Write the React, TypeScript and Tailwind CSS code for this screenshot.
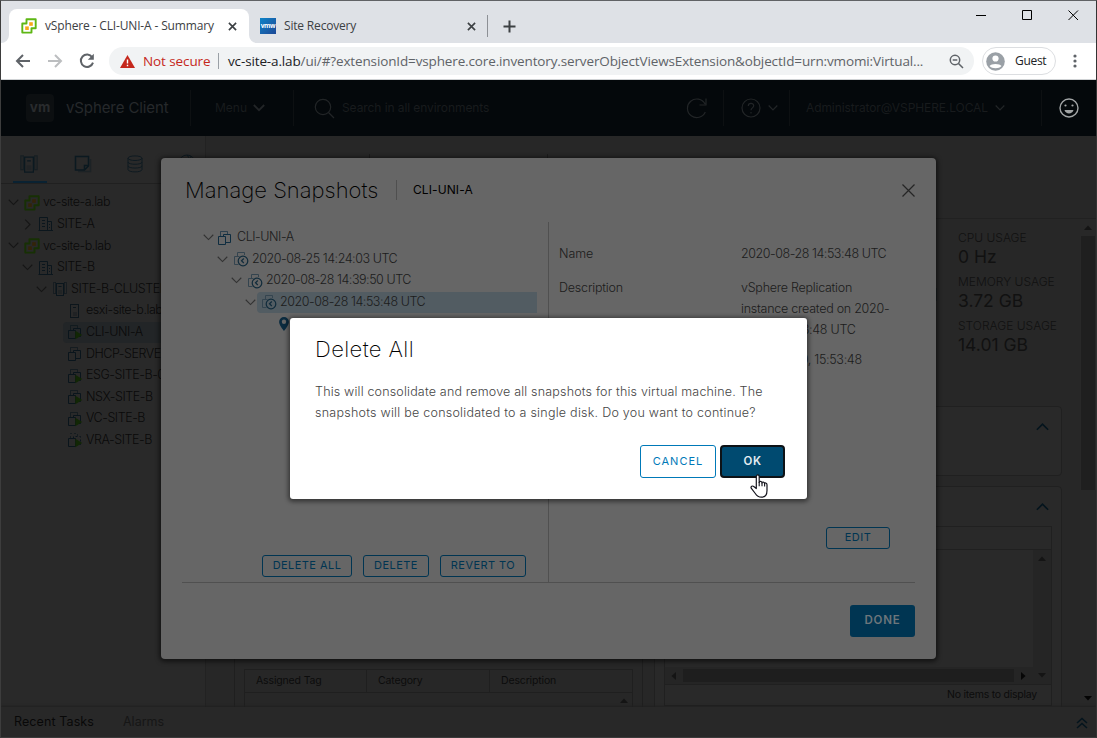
import type { ReactNode } from "react";

function Chevron({ dir = "down", size = 10, color = "#161616", w = 1.2 }: { dir?: "down" | "right" | "up"; size?: number; color?: string; w?: number }) {
  const d = dir === "down" ? "M0.8 3 L6 8.2 L11.2 3" : dir === "up" ? "M0.8 9 L6 3.8 L11.2 9" : "M3.5 0.8 L8.7 6 L3.5 11.2";
  return (
    <svg width={size} height={size} viewBox="0 0 12 12" fill="none" stroke={color} strokeWidth={w} className="shrink-0">
      <path d={d} />
    </svg>
  );
}

function VSphereIcon({ green, orange, size = 16 }: { green: string; orange: string; size?: number }) {
  return (
    <svg width={size} height={size} viewBox="0 0 16 16" fill="none" className="shrink-0">
      <path d="M5.5 5.5 V1.2 H14.7 V10.2 H10.5 V14.6 H1.3 V5.5 Z" stroke={green} strokeWidth="1.9" strokeLinejoin="round" />
      <rect x="8.2" y="4.2" width="3.6" height="3.6" fill={orange} />
      <rect x="4.2" y="8.4" width="3.6" height="3.6" fill={orange} />
    </svg>
  );
}

function SiteIcon() {
  return (
    <svg width="16" height="16" viewBox="0 0 16 16" fill="none" stroke="#0b161d" className="shrink-0">
      <path d="M1.5 14.5V1.5H9.5V14.5M9.5 5.5H13.5V14.5M0.5 14.5H15M4 4.5H7M4 7.5H7M4 10.5H7M11 8.5H12M11 11.5H12" />
    </svg>
  );
}

function ClusterIcon({ size = 16, color = "#0b161d" }: { size?: number; color?: string }) {
  return (
    <svg width={size} height={size} viewBox="0 0 16 16" fill="none" stroke={color} className="shrink-0">
      <path d="M4 1.5H1.5V12.5H4M12 1.5H14.5V12.5H12M3.5 1.5V12.5M12.5 1.5V12.5" opacity=".6" />
      <rect x="4.5" y="2.5" width="7" height="12" />
      <path d="M6.5 5.5H9.5" />
      <rect x="6" y="9" width="4" height="4" fill={color} opacity=".25" stroke="none" />
    </svg>
  );
}

function HostIcon() {
  return (
    <svg width="16" height="16" viewBox="0 0 16 16" fill="none" stroke="#0c151b" className="shrink-0">
      <rect x="3.5" y="1.5" width="8" height="13" />
      <path d="M6 4.5H9" />
      <rect x="6" y="9" width="4" height="4" fill="#0c151b" opacity=".3" stroke="none" />
    </svg>
  );
}

function VmIcon({ color = "#0a151c", running = false, dots = false }: { color?: string; running?: boolean; dots?: boolean }) {
  return (
    <svg width="16" height="16" viewBox="0 0 16 16" fill="none" stroke={color} className="shrink-0">
      <path d="M3.5 6V1.5H10.5V5" opacity=".65" strokeDasharray={dots ? "2 2" : undefined} />
      <path d="M6.5 6.5V4.5H13.5V12.5H8.5" strokeDasharray={dots ? "2 2" : undefined} />
      <path d="M1.5 6.5H8.5V14.5H1.5Z" />
      {running && <path d="M8.3 6.8 L15.2 11 L8.3 15.2 Z" fill="#122705" stroke="none" />}
    </svg>
  );
}

function SnapshotIcon() {
  return (
    <svg width="16" height="16" viewBox="0 0 16 16" fill="none" className="shrink-0">
      <path d="M4.5 5V1.5H11.5V4M5.5 13.5H1.5V5.5H6.5" stroke="#34444f" />
      <circle cx="10" cy="10" r="4.8" stroke="#102b3b" strokeWidth="1.2" />
      <path d="M10.8 7.5 L8.5 9.8 L10.8 12" stroke="#102b3b" strokeWidth="1.2" />
    </svg>
  );
}

const green = "#173004";
const orange = "#332408";

type Row = { pad: string; chev: "down" | "right" | null; icon: ReactNode; label: string; active?: boolean };

const inventory: Row[] = [
  { pad: "pl-[5px]", chev: "down", icon: <VSphereIcon green={green} orange={orange} />, label: "vc-site-a.lab" },
  { pad: "pl-[19px]", chev: "right", icon: <SiteIcon />, label: "SITE-A" },
  { pad: "pl-[5px]", chev: "down", icon: <VSphereIcon green={green} orange={orange} />, label: "vc-site-b.lab" },
  { pad: "pl-[19px]", chev: "down", icon: <SiteIcon />, label: "SITE-B" },
  { pad: "pl-[33px]", chev: "down", icon: <ClusterIcon />, label: "SITE-B-CLUSTER" },
  { pad: "pl-[48px]", chev: null, icon: <HostIcon />, label: "esxi-site-b.lab" },
  { pad: "pl-[48px]", chev: null, icon: <VmIcon running />, label: "CLI-UNI-A", active: true },
  { pad: "pl-[48px]", chev: null, icon: <VmIcon />, label: "DHCP-SERVER" },
  { pad: "pl-[48px]", chev: null, icon: <VmIcon running />, label: "ESG-SITE-B-01" },
  { pad: "pl-[48px]", chev: null, icon: <VmIcon running />, label: "NSX-SITE-B" },
  { pad: "pl-[48px]", chev: null, icon: <VmIcon running />, label: "VC-SITE-B" },
  { pad: "pl-[48px]", chev: null, icon: <VmIcon running dots />, label: "VRA-SITE-B" },
];

function TitleBar() {
  return (
    <div className="flex h-[42px] shrink-0 items-end bg-[#dee1e6] font-['Open_Sans','Noto_Sans',sans-serif] text-[12px] text-[#3c4043]">
      <svg width="8" height="8" viewBox="0 0 8 8" className="shrink-0"><path d="M8 0V8H0A8 8 0 0 0 8 0Z" fill="#fff" /></svg>
      <div className="flex h-[34px] w-[240px] shrink-0 items-center rounded-t-lg bg-white pl-[12px]">
        <VSphereIcon green="#5eb715" orange="#f7a81b" />
        <span className="ml-2 w-[180px] whitespace-nowrap tracking-[-0.15px]">vSphere - CLI-UNI-A - Summary</span>
        <svg width="9" height="9" viewBox="0 0 10 10" stroke="#3c4043" strokeWidth="1.8" className="ml-[3px]"><path d="M1 1L9 9M9 1L1 9" /></svg>
      </div>
      <svg width="8" height="8" viewBox="0 0 8 8" className="shrink-0"><path d="M0 0V8H8A8 8 0 0 1 0 0Z" fill="#fff" /></svg>
      <div className="flex h-[34px] w-[231px] items-center border-r border-[#8d9095] [border-image:linear-gradient(transparent_7px,#8d9095_7px,#8d9095_27px,transparent_27px)_1] pl-[3px]">
        <div className="flex h-4 w-4 items-center justify-center bg-linear-to-br from-[#0b84c8] to-[#1b4896] text-[6.5px] font-bold tracking-[-0.4px] text-white">vmw</div>
        <span className="ml-2 w-[181px] whitespace-nowrap tracking-[-0.18px]">Site Recovery</span>
        <svg width="9" height="9" viewBox="0 0 10 10" stroke="#3c4043" strokeWidth="1.8" className="ml-[2px]"><path d="M1 1L9 9M9 1L1 9" /></svg>
      </div>
      <div className="flex h-[34px] items-center pl-[15px]">
        <svg width="13" height="13" viewBox="0 0 13 13" stroke="#3c4043" strokeWidth="2"><path d="M6.5 0.5V12.5M0.5 6.5H12.5" /></svg>
      </div>
      <div className="ml-auto flex h-[42px] items-start gap-[35px] pt-[9px] pr-[17px]">
        <svg width="11" height="11" viewBox="0 0 11 11" stroke="#000" fill="none"><path d="M0 5.5H10" /></svg>
        <svg width="11" height="11" viewBox="0 0 11 11" stroke="#000" fill="none"><path d="M0.5 0.5H9.5V9.5H0.5Z" /></svg>
        <svg width="11" height="11" viewBox="0 0 11 11" stroke="#000" fill="none"><path d="M0.5 0.5L10 10M10 0.5L0.5 10" /></svg>
      </div>
    </div>
  );
}

function Toolbar() {
  return (
    <div className="flex h-[37px] shrink-0 items-center border-b border-[#cfd2d4] bg-white pl-[14px] font-['Open_Sans','Noto_Sans',sans-serif] text-[14px]">
      <svg width="16" height="14" viewBox="0 0 16 14" fill="none" stroke="#5f6368" strokeWidth="2"><path d="M15 7H2M8 1L2 7L8 13" /></svg>
      <svg width="16" height="14" viewBox="0 0 16 14" fill="none" stroke="#bcbec0" strokeWidth="2" className="ml-[16px]"><path d="M1 7H14M8 1L14 7L8 13" /></svg>
      <svg width="16" height="16" viewBox="0 0 16 16" fill="none" stroke="#5f6368" strokeWidth="2" className="ml-[16px]"><path d="M13.2 4.2A6.2 6.2 0 1 0 14 9.6" /><path d="M14.8 0.8V6.8H8.8Z" fill="#5f6368" stroke="none" /></svg>
      <div className="ml-[14px] flex h-7 w-[865px] shrink-0 items-center rounded-full bg-[#f1f3f4] pl-[11px]">
        <svg width="15" height="13" viewBox="0 0 15 13"><path d="M7.5 0L15 13H0Z" fill="#c5281c" /><path d="M7.5 4.5V8.5M7.5 9.7V11.2" stroke="#fff" strokeWidth="1.4" /></svg>
        <span className="ml-[8px] w-[67px] whitespace-nowrap text-[13.5px] tracking-[-0.1px] text-[#c5281c]">Not secure</span>
        <span className="ml-[8px] h-4 w-px bg-[#9aa0a6]" />
        <span className="ml-[9px] w-[700px] whitespace-nowrap text-[13.5px] tracking-[-0.135px] text-[#5f6368]"><span className="text-[#202124]">vc-site-a.lab</span>/ui/#?extensionId=vsphere.core.inventory.serverObjectViewsExtension&amp;objectId=urn:vmomi:Virtual...</span>
        <svg width="15" height="15" viewBox="0 0 15 15" fill="none" stroke="#5f6368" strokeWidth="1.5" className="mr-[10px] ml-auto"><circle cx="6" cy="6" r="4.7" /><path d="M3.7 6H8.3M9.5 9.5L14 14" /></svg>
      </div>
      <div className="ml-[8px] flex h-7 w-[74px] shrink-0 items-center rounded-full border border-[#dcdee1] pl-[3px]">
        <svg width="19" height="19" viewBox="0 0 19 19"><circle cx="9.5" cy="9.5" r="9.3" fill="#9aa0a6" /><circle cx="9.5" cy="6.5" r="3.1" fill="#fff" /><path d="M3.5 14C5 11.3 14 11.3 15.5 14C13 17 6 17 3.5 14Z" fill="#fff" /></svg>
        <span className="ml-[10px] text-[12px] tracking-[-0.3px] text-[#202124]">Guest</span>
      </div>
      <svg width="4" height="14" viewBox="0 0 4 14" fill="#5f6368" className="ml-[17px]"><circle cx="2" cy="2" r="1.6" /><circle cx="2" cy="7" r="1.6" /><circle cx="2" cy="12" r="1.6" /></svg>
    </div>
  );
}

function AppHeader() {
  return (
    <div className="flex h-14 shrink-0 items-center bg-[#04080b] text-[13px] text-[#181b1d]">
      <div className="flex h-9 w-[190px] items-center border-r border-[#0d1012] pl-[25px]">
        <div className="flex h-7 w-7 items-center justify-center rounded-sm bg-[#0c0f11] pb-[2px] text-[13.5px] font-bold text-[#292b2d]">vm</div>
        <span className="ml-3 text-[15px] font-normal tracking-[-0.1px] whitespace-nowrap text-[#26292b]">vSphere Client</span>
      </div>
      <div className="flex h-9 w-[103px] items-center border-r border-[#0d1012] pl-[24px]">
        <span className="mr-[7px] w-[31px] text-[12px]">Menu</span><Chevron size={12} color="#222527" w={1.8} />
      </div>
      <div className="flex h-9 w-[430px] items-center border-r border-[#0d1012] pl-[20px]">
        <svg width="21" height="21" viewBox="0 0 21 21" fill="none" stroke="#222527" strokeWidth="1.2"><circle cx="9" cy="9" r="7.7" /><path d="M14.5 14.5L20 20" /></svg>
        <span className="ml-[7px] text-[12px] font-normal tracking-[-0.08px]">Search in all environments</span>
        <svg width="21" height="21" viewBox="0 0 21 21" fill="none" stroke="#222527" strokeWidth="1.2" className="mr-[16px] ml-auto"><path d="M19 6A9.3 9.3 0 1 0 19.3 14M20 0.5V7H13.5" /></svg>
      </div>
      <div className="flex h-9 w-[66px] items-center border-r border-[#0d1012] pl-[17px]">
        <svg width="20" height="20" viewBox="0 0 20 20" fill="none" stroke="#222527" strokeWidth="1.2"><circle cx="10" cy="10" r="9" /><path d="M7.3 8C7.3 4.6 12.7 4.6 12.7 7.8C12.7 10 10 9.8 10 12.2M10 14V15.5" /></svg>
        <span className="ml-[7px] flex"><Chevron color="#222527" w={1.5} /></span>
      </div>
      <div className="flex h-9 w-[252px] items-center border-r border-[#0d1012] pl-[16px]">
        <span className="mr-[6px] w-[183px] text-[12px] font-normal tracking-[-0.1px] whitespace-nowrap">Administrator@VSPHERE.LOCAL</span><Chevron color="#222527" w={1.5} />
      </div>
      <svg width="20" height="20" viewBox="0 0 20 20" fill="none" stroke="#a2a5a6" strokeWidth="1.4" className="ml-[17px]"><circle cx="10" cy="10" r="9" /><circle cx="6.5" cy="7.5" r="1.1" fill="#a2a5a6" stroke="none" /><circle cx="13.5" cy="7.5" r="1.1" fill="#a2a5a6" stroke="none" /><path d="M5.5 12H14.5C13.6 16.5 6.4 16.5 5.5 12Z" fill="#a2a5a6" stroke="none" /></svg>
    </div>
  );
}

function Sidebar() {
  return (
    <div className="flex w-[205px] shrink-0 flex-col border-r border-[#222] bg-[#292929]">
      <div className="flex h-[48px] shrink-0 border-b border-[#202020] pl-[12px]">
        <div className="flex w-[34px] justify-center border-b-2 border-[#0a2232] pt-[18px] pr-[2px]"><ClusterIcon size={20} color="#0b1920" /></div>
        <svg width="18" height="18" viewBox="0 0 18 18" fill="none" stroke="#0b1920" strokeWidth="1.5" className="mt-[19px] ml-[27px]"><path d="M1.5 1.5H14.5V11L10.5 15H1.5ZM14.5 10.5H10.5V15" /><path d="M16.5 4V16.5H4" opacity=".4" /></svg>
        <svg width="18" height="18" viewBox="0 0 18 18" fill="none" stroke="#0e1a21" strokeWidth="1" className="mt-[19px] ml-[34px]"><ellipse cx="9" cy="3.2" rx="7" ry="2.3" /><path d="M2 3.2V14.5C2 17.7 16 17.7 16 14.5V3.2M2 7C2 10 16 10 16 7M2 10.8C2 13.8 16 13.8 16 10.8" /></svg>
        <svg width="18" height="18" viewBox="0 0 18 18" fill="none" stroke="#0e1a21" strokeWidth="1" className="mt-[18px] ml-[34px]"><circle cx="9" cy="9" r="8" /><path d="M2 5C8 8 13 6 13 2M9 1C14 7 13 13 9 17" /></svg>
      </div>
      <div className="flex flex-col overflow-hidden pt-[8px]">
        {inventory.map((r) => (
          <div key={r.label} className={`flex h-[21.6px] items-center text-[12.5px] font-light tracking-[-0.45px] text-[#0a0a0a] ${r.pad}`}>
            <span className="flex w-[14px] shrink-0 justify-center">{r.chev && <Chevron dir={r.chev} size={11} />}</span>
            <span className={`flex h-[21px] flex-1 items-center rounded-l-sm pl-1 ${r.active ? "bg-[#222527]" : ""}`}>
              {r.icon}
              <span className="ml-[3px] whitespace-nowrap">{r.label}</span>
            </span>
          </div>
        ))}
      </div>
    </div>
  );
}

function Usage({ label, value }: { label: string; value: string }) {
  return (
    <div className="h-[44px] whitespace-nowrap">
      <div className="text-[12px] leading-[18px] font-light">{label}</div>
      <div className="text-[17.5px] leading-[20px] font-normal">{value}</div>
    </div>
  );
}

function Triangle({ dir, color = "#141414" }: { dir: "up" | "down" | "left" | "right"; color?: string }) {
  const d = { up: "M0 6L4 1.5L8 6Z", down: "M0 2L4 6.5L8 2Z", left: "M6 0L1.5 4L6 8Z", right: "M2 0L6.5 4L2 8Z" }[dir];
  return <svg width="8" height="8" viewBox="0 0 8 8" fill={color} className="shrink-0"><path d={d} /></svg>;
}

function Content() {
  return (
    <div className="flex min-w-0 flex-1 flex-col bg-[#272727]">
      <div className="flex h-[83px] shrink-0 border-b border-[#212121] pt-[18px]">
        <span className="ml-[163px] h-5 w-px bg-[#1c1c1c]" />
        <span className="ml-[177px] h-5 w-px bg-[#1c1c1c]" />
      </div>
      <div className="flex min-h-0 flex-1">
        <div className="flex min-w-0 flex-1 flex-col overflow-hidden pl-[28px]">
          <div className="flex h-[187px] shrink-0 justify-end pt-[10px]">
            <span className="mt-[59px] mr-[21px] h-[13px] w-4 bg-[#1c2022]" />
            <div className="w-[104px] text-[#111]">
              <Usage label="CPU USAGE" value="0 Hz" />
              <Usage label="MEMORY USAGE" value="3.72 GB" />
              <Usage label="STORAGE USAGE" value="14.01 GB" />
            </div>
          </div>
          <div className="flex shrink-0">
            <div className="flex h-[310px] w-[409px] flex-col border border-[#1f1f1f] px-[9px] pt-[262px]">
              <div className="flex h-[24px] shrink-0 border border-[#1f1f1f] text-[10.5px] tracking-[-0.15px] text-[#0c0c0c]">
                <span className="w-[122px] border-r border-[#1f1f1f] pt-[3px] pl-[11px]">Assigned Tag</span>
                <span className="w-[123px] border-r border-[#1f1f1f] pt-[3px] pl-[11px]">Category</span>
                <span className="pt-[3px] pl-[11px]">Description</span>
              </div>
              <div className="flex flex-1 items-start justify-end border-x border-[#1f1f1f] pt-[4px] pr-[4px]"><Triangle dir="up" /></div>
            </div>
            <div className="ml-[11px] flex w-[408px] flex-col gap-[10px]">
              <div className="flex h-[70px] justify-end rounded-sm border border-[#202020] bg-[#292929] pt-[13px] pr-[12px]"><Chevron dir="up" size={13} color="#04141d" w={1.5} /></div>
              <div className="flex h-[230px] flex-col rounded-sm border border-[#202020] bg-[#292929] px-[9px]">
                <div className="flex h-[39px] shrink-0 justify-end pt-[13px] pr-[3px]"><Chevron dir="up" size={13} color="#04141d" w={1.5} /></div>
                <div className="flex h-[180px] flex-col border border-[#202020]">
                  <div className="h-[23px] shrink-0 border-b border-[#202020]" />
                  <div className="flex h-[135px] shrink-0 border-b border-[#202020]">
                    <div className="flex flex-1 flex-col justify-end">
                      <div className="flex h-[17px] items-center bg-[#252525] pl-[5px]"><Triangle dir="left" /><div className="mx-[5px] h-[13px] w-[331px] bg-[#1e1e1e]" /><Triangle dir="right" color="#060606" /></div>
                    </div>
                    <div className="flex w-[18px] flex-col items-center justify-between bg-[#252525] py-[5px]"><Triangle dir="up" /><Triangle dir="down" /></div>
                  </div>
                  <div className="pt-[2px] pr-[14px] text-right text-[10.5px] leading-[16px] tracking-[-0.24px] text-[#0c0c0c]">No items to display</div>
                </div>
              </div>
            </div>
          </div>
        </div>
        <div className="flex w-[34px] shrink-0 flex-col items-end">
          <div className="flex w-4 flex-1 flex-col items-center bg-[#282828] pt-[5px]">
            <Triangle dir="up" />
            <div className="mt-[4px] h-[254px] w-[14px] bg-[#1f1f1f]" />
            <div className="mt-auto mb-[5px]"><Triangle dir="down" color="#040404" /></div>
          </div>
        </div>
      </div>
    </div>
  );
}

function OutlineButton({ width, children }: { width: string; children: ReactNode }) {
  return <button className={`flex h-[22px] items-center justify-center rounded-[3px] border border-[#003552] pb-[2px] text-[11px] tracking-[0.45px] text-[#003552] ${width}`}>{children}</button>;
}

const snapshots = [
  { pad: "pl-[14px]", label: "2020-08-25 14:24:03 UTC", active: false },
  { pad: "pl-[28px]", label: "2020-08-28 14:39:50 UTC", active: false },
  { pad: "pl-[42px]", label: "2020-08-28 14:53:48 UTC", active: true },
];

function ManageSnapshots() {
  return (
    <div className="absolute top-[157px] left-[160px] flex h-[501px] w-[775px] flex-col rounded-sm bg-[#666] px-[21px] shadow-[0_1px_4px_2px_rgba(0,0,0,0.5)]">
      <div className="flex h-[64px] shrink-0 items-center pl-[3px] text-black">
        <h2 className="w-[211px] text-[22px] font-extralight tracking-[0px] whitespace-nowrap">Manage Snapshots</h2>
        <span className="h-5 w-px bg-[#4f4f4f]" />
        <span className="ml-[16px] text-[12px] font-normal tracking-[0.1px]">CLI-UNI-A</span>
        <svg width="13" height="13" viewBox="0 0 13 13" stroke="#252525" strokeWidth="1.2" className="ml-auto"><path d="M0.5 0.5L12.5 12.5M12.5 0.5L0.5 12.5" /></svg>
      </div>
      <div className="flex h-[361px] shrink-0 border-b border-[#505050] text-[12.5px] font-light text-[#1b1b1b]">
        <div className="flex w-[367px] shrink-0 flex-col border-r border-[#505050] pt-[5px] pl-[19px] tracking-[-0.45px]">
          <div className="flex h-[21.5px] items-center">
            <span className="flex w-[14px] justify-center"><Chevron size={11} color="#333" /></span>
            <span className="ml-[2px] flex"><VmIcon color="#0f2d40" /></span>
            <span className="ml-[4px]">CLI-UNI-A</span>
          </div>
          {snapshots.map((s) => (
            <div key={s.label} className={`flex h-[21.5px] items-center pr-[11px] ${s.pad}`}>
              <span className="flex w-[14px] shrink-0 justify-center"><Chevron size={11} color="#333" /></span>
              <span className={`flex h-[21px] flex-1 items-center rounded-l-sm pl-[4px] ${s.active ? "bg-[#525c62]" : ""}`}>
                <SnapshotIcon />
                <span className="ml-[3px] whitespace-nowrap">{s.label}</span>
              </span>
            </div>
          ))}
          <div className="flex h-[21.5px] items-center pl-[78px]">
            <svg width="10" height="14" viewBox="0 0 10 14"><path fillRule="evenodd" d="M5 0A4.9 4.9 0 0 1 9.9 4.9C9.9 8 5 14 5 14S0.1 8 0.1 4.9A4.9 4.9 0 0 1 5 0ZM5 2.6A2.2 2.2 0 1 0 5 7A2.2 2.2 0 0 0 5 2.6Z" fill="#0b2b3f" /></svg>
          </div>
          <div className="mt-auto mb-[5px] flex gap-[11px] pl-[61px] font-normal">
            <OutlineButton width="w-[90px]">DELETE ALL</OutlineButton>
            <OutlineButton width="w-[66px]">DELETE</OutlineButton>
            <OutlineButton width="w-[86px]">REVERT TO</OutlineButton>
          </div>
        </div>
        <div className="flex flex-1 flex-col pt-[21px] pl-[10px]">
          <div className="grid grid-cols-[182px_155px] gap-y-[13px] leading-[21px]">
            <span className="tracking-[-0.1px]">Name</span><span className="tracking-[-0.45px] whitespace-nowrap">2020-08-28 14:53:48 UTC</span>
            <span className="tracking-[-0.2px]">Description</span><span className="tracking-[-0.25px]">vSphere Replication<br />instance created on 2020-<br />08-28 14:53:48 UTC</span>
          </div>
          <div className="mt-[9px] grid grid-cols-[182px_155px] leading-[21px]">
            <span>Created</span><span className="tracking-[-0.3px] whitespace-nowrap">28/08/2020, 15:53:48</span>
          </div>
          <div className="mt-auto mb-[33px] flex justify-end pr-[25px] font-normal"><OutlineButton width="w-[64px]">EDIT</OutlineButton></div>
        </div>
      </div>
      <button className="mt-[22px] flex h-8 w-[65px] items-center justify-center self-end rounded-[3px] bg-[#003552] text-[11.5px] font-semibold tracking-[0.8px] text-[#6d767b]">DONE</button>
    </div>
  );
}

function DeleteAllDialog() {
  return (
    <div className="absolute top-[317px] left-[289px] flex h-[181px] w-[517px] flex-col rounded-[3px] bg-white px-[25px] shadow-[0_1px_4px_2px_rgba(0,0,0,0.45)]">
      <h3 className="mt-[16px] text-[22px] leading-[30px] font-extralight tracking-[0.4px] text-black">Delete All</h3>
      <p className="mt-[17px] text-[12.5px] leading-[21px] font-light tracking-[0.18px] whitespace-nowrap text-[#454545]">
        This will consolidate and remove all snapshots for this virtual machine. The<br />
        <span className="tracking-[0.25px]">snapshots will be consolidated to a single disk. Do you want to continue?</span>
      </p>
      <div className="mt-[22px] mr-[-3px] flex items-center justify-end gap-1">
        <button className="flex h-[33px] w-[76px] items-center justify-center rounded-[3px] border border-[#0079b8] text-[11px] tracking-[1px] text-[#0079b8]">CANCEL</button>
        <button className="flex h-[33px] w-[65px] items-center justify-center rounded-[4px] border-2 border-[#0d1216] bg-[#004a70] text-[11.5px] font-semibold tracking-[0.6px] text-[#e4edf2]">OK</button>
      </div>
      <svg width="18" height="24" viewBox="0 0 18 24" className="absolute top-[156px] left-[460px]">
        <path d="M6.3 14.5V2.6C6.3 0.4 9.2 0.4 9.2 2.6V8.5C9.2 6.9 12 7 12 9C12 7.5 14.6 7.7 14.6 9.7C14.6 8.5 17 8.7 17 10.8V16.5C17 20.8 15.5 23.2 11.5 23.2C7.8 23.2 6.8 22 5.3 19.5L1.2 14.2C0.4 12.4 2.5 11.4 3.8 12.5Z" fill="#fff" stroke="#13131c" strokeWidth="1.2" strokeLinejoin="round" />
        <path d="M9.2 8V12.2M12 9V12.2M14.6 9.8V12.5" stroke="#13131c" strokeWidth="1.1" />
      </svg>
    </div>
  );
}

export default function App() {
  return (
    <div className="relative flex h-[738px] w-[1097px] flex-col overflow-hidden border border-t-[#606265] border-r-[#333] border-b-[#3b3b3b] border-l-[#3d3d3d] font-[Inter,'Liberation_Sans',sans-serif]">
      <TitleBar />
      <Toolbar />
      <AppHeader />
      <div className="flex min-h-0 flex-1">
        <Sidebar />
        <Content />
      </div>
      <div className="flex h-[30px] shrink-0 items-center bg-[#282828] pt-px pl-[13px] text-[12.5px] text-[#080808] shadow-[0_-1px_2px_#202020]">
        <span className="w-[109px] tracking-[0.1px]">Recent Tasks</span>
        <span className="text-[#161616]">Alarms</span>
        <svg width="12" height="12" viewBox="0 0 12 12" fill="none" stroke="#04141d" strokeWidth="1.5" className="mr-[8px] ml-auto"><path d="M1 6L6 1.5L11 6M1 11L6 6.5L11 11" /></svg>
      </div>
      <ManageSnapshots />
      <DeleteAllDialog />
    </div>
  );
}
